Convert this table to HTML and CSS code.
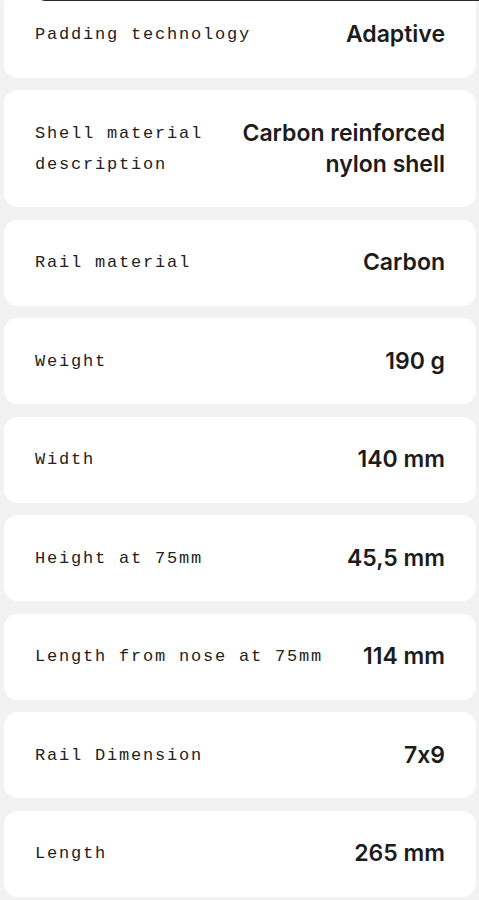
FILE: index.html
```html
<!DOCTYPE html>
<html lang="en">
<head>
    <meta charset="UTF-8">
    <meta name="viewport" content="width=device-width, initial-scale=1.0">
    <title>Specifications</title>
    <link rel="stylesheet" href="styles.css">
</head>
<body>
    <div class="top-bar"></div>

    <div class="spec-list">
        <div class="spec-row">
            <div class="spec-label">Padding technology</div>
            <div class="spec-value">Adaptive</div>
        </div>
        <div class="spec-row">
            <div class="spec-label">Shell material description</div>
            <div class="spec-value">Carbon reinforced nylon shell</div>
        </div>
        <div class="spec-row">
            <div class="spec-label">Rail material</div>
            <div class="spec-value">Carbon</div>
        </div>
        <div class="spec-row">
            <div class="spec-label">Weight</div>
            <div class="spec-value">190 g</div>
        </div>
        <div class="spec-row">
            <div class="spec-label">Width</div>
            <div class="spec-value">140 mm</div>
        </div>
        <div class="spec-row">
            <div class="spec-label">Height at 75mm</div>
            <div class="spec-value">45,5 mm</div>
        </div>
        <div class="spec-row">
            <div class="spec-label">Length from nose at 75mm</div>
            <div class="spec-value">114 mm</div>
        </div>
        <div class="spec-row">
            <div class="spec-label">Rail Dimension</div>
            <div class="spec-value">7x9</div>
        </div>
        <div class="spec-row">
            <div class="spec-label">Length</div>
            <div class="spec-value">265 mm</div>
        </div>
    </div>
</body>
</html>
```

FILE: styles.css
```css
body {
    margin: 0;
    background-color: #f2f2f2;
    overflow: hidden;
}
.top-bar {
    position: absolute;
    top: -20px;
    left: 35px;
    right: -12px;
    height: 21px;
    background-color: #2a2a2a;
    border-radius: 12px;
    z-index: 2;
}
.spec-list {
    display: flex;
    flex-direction: column;
    gap: 12.5px;
    margin: -8.5px 3px 0 4px;
}
.spec-row {
    display: flex;
    align-items: center;
    gap: 20px;
    background-color: #fff;
    border-radius: 14px;
    padding: 27.5px 31px;
}
.spec-label {
    flex: 1;
    font-family: "Liberation Mono", monospace;
    font-size: 17px;
    letter-spacing: 1.8px;
    line-height: 31px;
    color: #222;
}
.spec-value {
    max-width: 212px;
    text-align: right;
    font-family: Inter, sans-serif;
    font-weight: 600;
    font-size: 23px;
    line-height: 31px;
    color: #1c1c1c;
    font-feature-settings: "calt" 0;
}
```
